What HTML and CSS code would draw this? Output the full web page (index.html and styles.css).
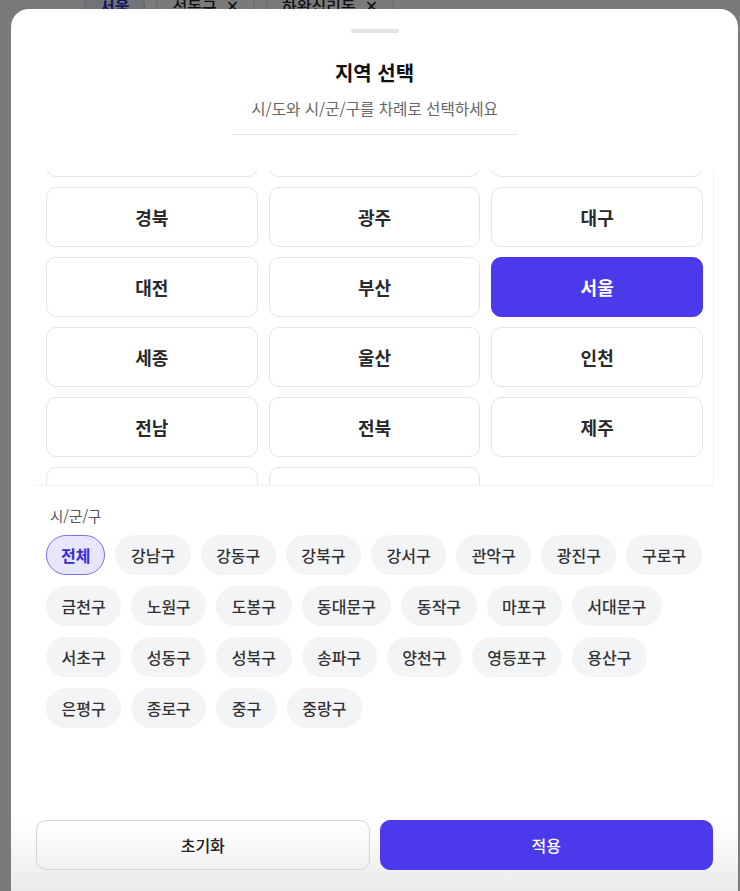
FILE: index.html
```html
<!DOCTYPE html>
<html lang="ko">
<head>
<meta charset="UTF-8" />
<title>지역 선택</title>
<link rel="stylesheet" href="styles.css">
</head>
<body>

<div class="filter-bar">
  <span class="filter-chip active">서울</span>
  <span class="filter-chip">성동구 <span class="x">✕</span></span>
  <span class="filter-chip">하왕십리동 <span class="x">✕</span></span>
</div>

<div class="overlay">
  <div class="sheet">
    <div class="handle"></div>

    <div class="sheet-head">
      <h2>지역 선택</h2>
      <p>시/도와 시/군/구를 차례로 선택하세요</p>
    </div>

    <div class="region-scroll" id="regionScroll">
      <div class="region-grid">
        <button class="region">강원</button>
        <button class="region">경기</button>
        <button class="region">경남</button>
        <button class="region">경북</button>
        <button class="region">광주</button>
        <button class="region">대구</button>
        <button class="region">대전</button>
        <button class="region">부산</button>
        <button class="region selected">서울</button>
        <button class="region">세종</button>
        <button class="region">울산</button>
        <button class="region">인천</button>
        <button class="region">전남</button>
        <button class="region">전북</button>
        <button class="region">제주</button>
        <button class="region">충남</button>
        <button class="region">충북</button>
      </div>
    </div>

    <div class="district">
      <div class="district-label">시/군/구</div>
      <div class="chips">
        <button class="chip selected">전체</button>
        <button class="chip">강남구</button>
        <button class="chip">강동구</button>
        <button class="chip">강북구</button>
        <button class="chip">강서구</button>
        <button class="chip">관악구</button>
        <button class="chip">광진구</button>
        <button class="chip">구로구</button>
        <button class="chip">금천구</button>
        <button class="chip">노원구</button>
        <button class="chip">도봉구</button>
        <button class="chip">동대문구</button>
        <button class="chip">동작구</button>
        <button class="chip">마포구</button>
        <button class="chip">서대문구</button>
        <button class="chip">서초구</button>
        <button class="chip">성동구</button>
        <button class="chip">성북구</button>
        <button class="chip">송파구</button>
        <button class="chip">양천구</button>
        <button class="chip">영등포구</button>
        <button class="chip">용산구</button>
        <button class="chip">은평구</button>
        <button class="chip">종로구</button>
        <button class="chip">중구</button>
        <button class="chip">중랑구</button>
      </div>
    </div>

    <div class="sheet-foot">
      <button class="btn-reset">초기화</button>
      <button class="btn-apply">적용</button>
    </div>
  </div>
</div>

<script src="scroll.js"></script>
</body>
</html>
```

FILE: styles.css
```css
* {
  box-sizing: border-box;
}
body {
  margin: 0;
  font-family: "Noto Sans CJK KR", "Noto Sans", sans-serif;
  background: #fff;
  color: #222;
  overflow: hidden;
}
button {
  font-family: inherit;
  cursor: pointer;
}

/* page behind the sheet */
.filter-bar {
  display: flex;
  gap: 11px;
  padding-left: 84px;
  margin-top: -12px;
}
.filter-chip {
  display: inline-flex;
  align-items: center;
  gap: 9px;
  height: 36px;
  padding: 0 15px;
  border: 1px solid #d9d9d9;
  border-radius: 18px;
  font-size: 16px;
  font-weight: 500;
  color: #222;
}
.filter-chip.active {
  background: #eef0ff;
  border-color: #c3c7f3;
  color: #2a33c4;
  font-weight: 700;
}
.filter-chip .x {
  font-family: "DejaVu Sans", sans-serif;
  font-size: 16px;
}

.overlay {
  position: fixed;
  inset: 0;
  background: rgba(0, 0, 0, 0.52);
  display: flex;
  align-items: flex-end;
}

.sheet {
  margin-left: 11px;
  width: 727px;
  height: 882px;
  display: flex;
  flex-direction: column;
  padding: 0 24px 21px;
  border-radius: 18px 18px 0 0;
  background: linear-gradient(180deg, #fff 0, #fff calc(100% - 70px), #eaeaea 100%);
}
.handle {
  width: 48px;
  height: 4px;
  border-radius: 2px;
  background: #e2e2e2;
  margin: 20px auto 0;
}
.sheet-head {
  width: 286px;
  margin: 26px auto 0;
  padding-bottom: 15px;
  border-bottom: 1px solid #e6e6e6;
  text-align: center;
}
.sheet-head h2 {
  margin: 0;
  font-size: 20px;
  line-height: 28px;
  font-weight: 700;
  color: #111;
}
.sheet-head p {
  margin: 10px 0 0;
  font-size: 15.6px;
  line-height: 22px;
  color: #666;
}

/* 시/도 grid */
.region-scroll {
  margin-top: 35px;
  height: 316px;
  overflow-y: auto;
  scrollbar-width: none;
  border-right: 1px solid #efefef;
  border-bottom: 1px solid #efefef;
}
.region-scroll::-webkit-scrollbar {
  display: none;
}
.region-grid {
  display: grid;
  grid-template-columns: repeat(3, 1fr);
  column-gap: 11px;
  row-gap: 10px;
  padding: 10px 10px 10px 11px;
}
.region {
  height: 60px;
  background: #fff;
  border: 1px solid #e5e5e8;
  border-radius: 10px;
  font-size: 18px;
  font-weight: 700;
  color: #2a2a2a;
}
.region.selected {
  background: #4b3aeb;
  border-color: #4b3aeb;
  color: #fff;
}

/* 시/군/구 chips */
.district {
  padding: 0 10px 0 11px;
}
.district-label {
  margin: 20px 0 0 4px;
  font-size: 14.5px;
  line-height: 20px;
  color: #555;
}
.chips {
  margin-top: 9px;
  display: flex;
  flex-wrap: wrap;
  column-gap: 10px;
  row-gap: 11px;
}
.chip {
  height: 40px;
  padding: 0 15.5px;
  border: none;
  border-radius: 20px;
  background: #f3f4f6;
  font-size: 16px;
  font-weight: 500;
  color: #333;
}
.chip.selected {
  background: #e7e6fd;
  border: 1px solid #7a70ee;
  padding: 0 14px;
  color: #3a2cd2;
  font-weight: 700;
}

/* footer buttons */
.sheet-foot {
  margin-top: auto;
  display: flex;
  gap: 10px;
  padding: 0 1px;
}
.sheet-foot button {
  flex: 1;
  height: 50px;
  border-radius: 10px;
  font-size: 16px;
  font-weight: 500;
}
.btn-reset {
  background: transparent;
  border: 1px solid #d4d4d4;
  color: #222;
}
.btn-apply {
  background: #4b3aeb;
  border: 1px solid #4b3aeb;
  color: #fff;
}
```

FILE: scroll.js
```js
// the grid is shown scrolled past the first row
document.getElementById('regionScroll').scrollTop = 63;
```
